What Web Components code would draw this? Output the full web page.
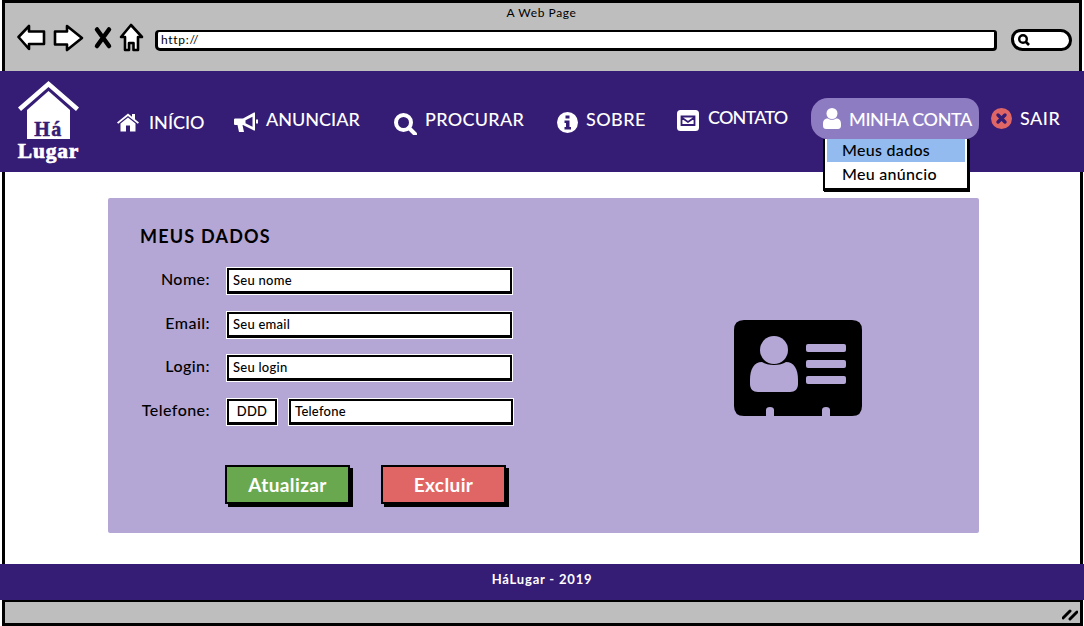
<!DOCTYPE html>
<html lang="pt"><head><meta charset="utf-8"><title>HáLugar</title>
<style>html,body{margin:0;padding:0;background:#fff}body{font-family:Lato,"Noto Sans",sans-serif}</style>
</head><body>
<x-browser>
  <x-logo slot="nav-logo"></x-logo>
  <x-nav slot="nav">
    <x-nav-item style="--mt:41px;--g:10px;--ls:0px"><svg slot="icon" width="22" height="20" viewBox="0 0 22 19"><path fill="#fff" d="M0 10 11 1l4 3.2V1.5h3v5.2l4 3.3-1.2 1.3L11 3.4 1.2 11.3zM3.5 11 11 5l7.500 6v8H13v-6H9v6H3.500z"/></svg>INÍCIO</x-nav-item>
    <x-nav-item style="--mt:38px;--g:8px;--ls:0px"><svg slot="icon" style="margin-top:3px" width="24" height="21" viewBox="0 0 24 20"><path fill="#fff" fill-rule="evenodd" d="M1 6h8l11-6h1v18h-1L9 12.500H8.500l1.500 7H5l-1.500-7H1c-1 0-1-1-1-1.500V7.500C0 7 0 6 1 6zm10.500 1.800v3l7 3.500V4.200zM22 7h2v4h-2z"/></svg>ANUNCIAR</x-nav-item>
    <x-nav-item style="--mt:38px;--g:8px;--ls:.3px"><svg slot="icon" style="margin-top:4px" width="23" height="22" viewBox="0 0 23 22"><circle cx="9.500" cy="9.500" r="7.500" fill="none" stroke="#fff" stroke-width="4"/><path d="m15 15 6 6" stroke="#fff" stroke-width="4" stroke-linecap="round"/></svg>PROCURAR</x-nav-item>
    <x-nav-item style="--mt:38px;--g:8px;--ls:.4px"><svg slot="icon" style="margin-top:3px" width="21" height="21" viewBox="0 0 21 21"><circle cx="10.500" cy="10.500" r="10.500" fill="#fff"/><path fill="#351c75" d="M8.500 3.500h4v3h-4zM7.500 8.500h5V15h1.500v2.500H7.500V15H9v-4H7.500z"/></svg>SOBRE</x-nav-item>
    <x-nav-item style="--mt:36px;--g:9px;--ls:-.8px"><svg slot="icon" style="margin-top:3px" width="22" height="21" viewBox="0 0 22 21"><rect width="22" height="21" rx="3.500" fill="#fff"/><path fill="none" stroke="#351c75" stroke-width="1.800" d="M4.500 6.500h13v8.500h-13zM4.500 7.500 11 12l6.500-4.500"/></svg>CONTATO</x-nav-item>
    <x-nav-item pill style="--g:8px;--ls:-.4px"><svg slot="icon" style="margin-top:-1px" width="18" height="21" viewBox="0 0 18 21"><circle cx="9" cy="5.500" r="5.500" fill="#fff"/><path fill="#fff" d="M0 16c0-4 2-5.500 5-5.500 1 .8 2.500 1.300 4 1.300s3-.5 4-1.300c3 0 5 1.500 5 5.500v2c0 2-1.500 3-3 3H3c-1.500 0-3-1-3-3z"/></svg>MINHA CONTA<x-dropdown slot="menu"><x-menu-item active>Meus dados</x-menu-item><x-menu-item>Meu anúncio</x-menu-item></x-dropdown></x-nav-item>
    <x-nav-item style="--mt:37px;--g:8px;--ls:.5px"><svg slot="icon" width="21" height="21" viewBox="0 0 21 21"><circle cx="10.500" cy="10.500" r="10.500" fill="#e06666"/><path d="m7 7 7 7M14 7l-7 7" stroke="#351c75" stroke-width="3.400" stroke-linecap="round"/></svg>SAIR</x-nav-item>
  </x-nav>
  <x-card>
    <x-form-panel>
      <x-field label="Nome:" style="--mt:22px"><x-input style="width:285px">Seu nome</x-input></x-field>
      <x-field label="Email:" style="--mt:18px"><x-input style="width:285px">Seu email</x-input></x-field>
      <x-field label="Login:" style="--mt:17px"><x-input style="width:285px">Seu login</x-input></x-field>
      <x-field label="Telefone:" style="--mt:18px"><x-input center style="width:50px">DDD</x-input><x-input style="width:224px">Telefone</x-input></x-field>
      <x-actions>
        <x-button style="--c:#6aa84f;--w:125px">Atualizar</x-button>
        <x-button style="--c:#e06666;--w:125px">Excluir</x-button>
      </x-actions>
    </x-form-panel>
    <x-id-icon></x-id-icon>
  </x-card>
</x-browser>
<script>
function def(name, css, html){
  customElements.define(name, class extends HTMLElement{
    constructor(){super();const r=this.attachShadow({mode:'open'});
      r.innerHTML='<style>'+css+'</style>'+(typeof html==='function'?html(this):html);}
  });
}
def('x-browser',`
 :host{display:flex;flex-direction:column;width:1084px;height:626px;overflow:hidden;position:relative;color:#000;font-family:Lato,"Noto Sans",sans-serif}
 .top{height:71px;box-sizing:border-box;margin:0 2px;border:solid #000;border-width:3px 3px 0;background:#bebebe;display:flex;flex-direction:column;align-items:center}
 .title{font-size:12px;line-height:14px;margin-top:3px;letter-spacing:.6px;margin-left:-1px}
 .tools{display:flex;align-items:center;align-self:stretch;height:30px;margin-top:3px;padding-left:12px}
 .url{box-sizing:border-box;width:842px;height:21px;margin:4px 0 0 10px;background:#fff;border:solid #000;border-width:2px 3px 3px 3px;border-radius:4px 3px 4px 5px;font-size:12px;line-height:15px;padding-left:3px;letter-spacing:.7px}
 .search{box-sizing:border-box;width:61px;height:22px;margin:4px 0 0 14px;background:#fff;border:3px solid #000;border-radius:10px 12px 11px 12px;display:flex;align-items:center;padding-left:3px}
 .nav{height:101px;background:#351c75;display:flex;position:relative;z-index:2;padding-left:17px;box-sizing:border-box}
 .main{height:392px;box-sizing:border-box;margin:0 1px 0 2px;border:solid #000;border-width:0 3px;background:#fff;padding:26px 0 0 103px}
 .foot{height:36px;background:#351c75;color:#fff;text-align:center;font-size:13px;font-weight:700;line-height:30px;letter-spacing:.8px}
 .status{height:26px;box-sizing:border-box;margin:0 1px 0 2px;border:solid #000;border-width:2px 3px 3px;background:#bebebe;display:flex;justify-content:flex-end;align-items:center;padding:2px 2px 0 0}
`,`<div class="top"><div class="title">A Web Page</div>
 <div class="tools">
  <svg width="128" height="30" viewBox="0 0 128 30" fill="#fff" stroke="#000" stroke-width="2.600" stroke-linejoin="round" style="flex:none">
   <path d="M1.500 14 12 3V8.500H27V21H12V26z"/>
   <path d="M38 8.500H50V3L65 15 50 27V21.500H38z"/>
   <path d="M80 6.500 92 23M92 6.500 80 23" stroke-width="4.500" stroke-linecap="round" fill="none"/>
   <path d="M104 14 114 2 125 14H121V27H116.500V20H112V27H108V14z"/>
  </svg>
  <div class="url">http://</div>
  <div class="search"><svg width="14" height="14" viewBox="0 0 14 14"><circle cx="6" cy="6" r="3.800" fill="none" stroke="#000" stroke-width="2.400"/><path d="m9 9 3 3" stroke="#000" stroke-width="2.600"/></svg></div>
 </div></div>
 <div class="nav"><slot name="nav-logo"></slot><slot name="nav"></slot></div>
 <div class="main"><slot></slot></div>
 <div class="foot">HáLugar - 2019</div>
 <div class="status"><svg width="16" height="14" viewBox="0 0 16 14"><path d="M1 11 8 4M8 12 15 5" stroke="#000" stroke-width="3" stroke-linecap="round"/></svg></div>`);

def('x-logo',`
 :host{display:grid;width:63px;height:80px;margin-top:10px;flex:none}
 svg,.ha,.lugar{grid-area:1/1}
 .t{font-family:"Liberation Serif",serif;font-weight:700}
 .ha{color:#351c75;font-size:20px;line-height:20px;text-align:center;margin-top:37.500px;letter-spacing:1.500px;-webkit-text-stroke:.5px #351c75}
 .lugar{color:#fff;font-size:21.500px;line-height:22px;text-align:center;margin-top:58.500px;letter-spacing:.8px;-webkit-text-stroke:.7px #fff}
`,`<svg width="63" height="80" viewBox="0 0 63 80"><path fill="#fff" d="M1 26.500 31.500 0 62 26.500 59 30 31.500 6 4 30z"/><path fill="#fff" d="M10 29 31.500 10 53 29V58H10z"/></svg><div class="t ha">Há</div><div class="t lugar">Lugar</div>`);

def('x-nav',`
 :host{display:grid;grid-template-columns:117px 160px 163px 120px 134px 180px 93px;margin-left:37px;height:101px;align-items:start;flex:none}
`,`<slot></slot>`);

def('x-nav-item',`
 :host{display:block;color:#fff;font-size:18px;font-weight:500;position:relative;margin-top:var(--mt,35px);letter-spacing:var(--ls,0)}
 .row{display:inline-flex;align-items:flex-start;gap:var(--g,8px);line-height:21px;white-space:nowrap}
 ::slotted(svg){flex:none}
 :host([pill]){margin-top:27px;margin-right:-1px}
 :host([pill]) .row{box-sizing:border-box;width:168px;height:41px;align-items:center;background:#8e7cc3;border-radius:17px 14px 14px 17px;padding:1px 0 0 12px;position:relative;z-index:2}
`,`<div class="row"><slot name="icon"></slot><span><slot></slot></span></div><slot name="menu"></slot>`);

def('x-dropdown',`
 :host{display:block;position:absolute;left:12px;top:41px;width:146px;height:52px;box-sizing:border-box;border:solid #000;border-width:0 2px 3px 2px;background:#fff;padding:0 2px;z-index:1;box-shadow:1px 1px 0 #000;letter-spacing:.3px}
`,`<slot></slot>`);
def('x-menu-item',`
 :host{display:block;color:#000;font-size:16px;line-height:22px;padding-left:15px;height:23px;font-weight:500}
 :host([active]){background:#93bbf0}
 :host(:not([active])){padding-top:1px}
`,`<slot></slot>`);

def('x-card',`
 :host{display:grid;grid-template-columns:626px 128px;width:871px;height:335px;background:#b4a7d6;border-radius:2px;box-sizing:border-box;align-items:start}
`,`<slot></slot>`);
def('x-form-panel',`
 :host{display:block;padding:28px 0 0 32px}
 h2{margin:0;font-size:18px;line-height:20px;font-weight:700;letter-spacing:1.200px}
`,`<h2>MEUS DADOS</h2><slot></slot>`);
def('x-field',`
 :host{display:flex;align-items:center;margin-top:var(--mt,18px);height:26px}
 label{box-sizing:border-box;width:70px;text-align:right;font-size:16px;font-weight:500;line-height:22px;margin:-4px 17px 0 0;letter-spacing:.45px}
 .box{display:flex;gap:12px}
`,e=>`<label>${e.getAttribute('label')}</label><div class="box"><slot></slot></div>`);
def('x-input',`
 :host{display:block;box-sizing:border-box;height:26px;background:#fff;border:solid #000;border-width:2px 2px 3px 2px;box-shadow:0 0 0 1px #fff;font-size:13px;line-height:20px;padding-left:4px;white-space:nowrap;font-weight:500;letter-spacing:.25px}
 :host([center]){text-align:center;padding-left:0}
`,`<slot></slot>`);
def('x-actions',`:host{display:flex;gap:31px;margin:40px 0 0 85px}`,`<slot></slot>`);
def('x-button',`
 :host{display:block;box-sizing:border-box;width:var(--w);height:39px;background:var(--c);border:2px solid #000;box-shadow:3px 3px 0 #000;color:#fff;text-align:center;font-size:19px;font-weight:700;line-height:36px;letter-spacing:.4px;margin-bottom:3px}
`,`<slot></slot>`);
def('x-id-icon',`
 :host{display:block;width:128px;height:96px;margin-top:122px}
`,`<svg width="128" height="96" viewBox="0 0 128 96"><path d="M10 0H118Q128 0 128 10V86Q128 96 118 96H96V90Q96 87 92 87T88 90V96H40V90Q40 87 36 87T32 90V96H10Q0 96 0 86V10Q0 0 10 0Z"/><circle cx="40" cy="30" r="14" fill="#b4a7d6"/><path fill="#b4a7d6" d="M28 42c3 2 7 3 12 3s9-1 12-3c8 0 12 7 12 18v4c0 5-3 8-8 8H24c-5 0-8-3-8-8v-4c0-11 4-18 12-18z"/><g fill="#b4a7d6"><rect x="72" y="24" width="40" height="8" rx="2"/><rect x="72" y="40" width="40" height="8" rx="2"/><rect x="72" y="56" width="40" height="8" rx="2"/></g></svg>`);
</script>
</body></html>
